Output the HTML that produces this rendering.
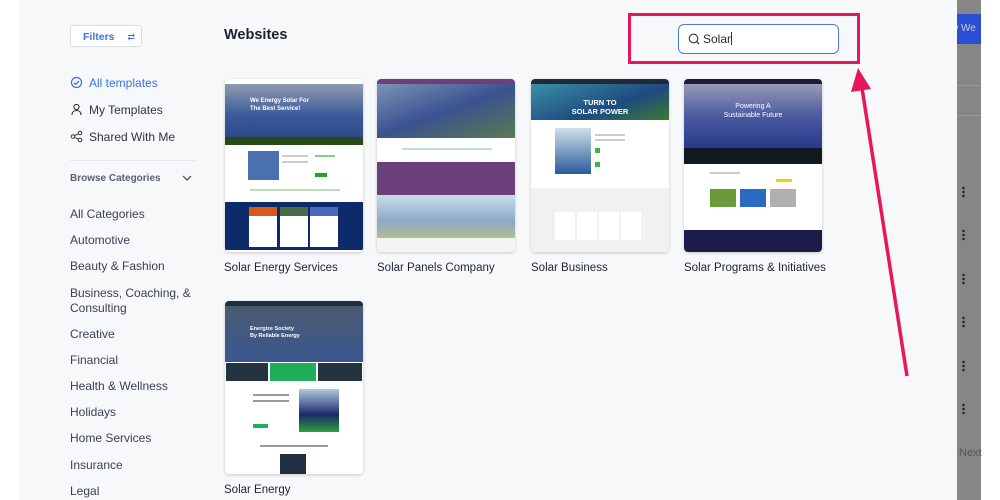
<!DOCTYPE html>
<html><head><meta charset="utf-8"><style>
*{margin:0;padding:0;box-sizing:border-box}
body{width:1000px;height:500px;overflow:hidden;background:#fff;font-family:"Liberation Sans",sans-serif;position:relative}
.main{position:absolute;left:19px;top:0;width:938px;height:500px;background:#f7f8fa}
.a{position:absolute}
.nav{position:absolute;left:70px;font-size:12px;color:#2d3340}
.cat{position:absolute;left:70px;font-size:12px;color:#3a4050;line-height:15px}
.card{position:absolute;width:138px;height:173px;border-radius:4px;overflow:hidden;background:#fff;box-shadow:0 1px 3px rgba(0,0,0,.18)}
.lbl{position:absolute;font-size:11.5px;color:#1f2430}
.gray{position:absolute;left:957px;top:0;width:24px;height:500px;background:#868686}
.dot{position:absolute;left:962px;width:3px;height:12px;background:radial-gradient(circle,#222 1px,transparent 1.5px) 0 0/3px 4px}
.ln{position:absolute;height:2px;background:#ccc}
</style></head><body>
<div class="main"></div>
<div class="a" style="left:70px;top:25px;width:72px;height:22px;border:1px solid #d9dde3;border-radius:3px;background:#fff;font-size:10.5px;color:#3b74e0;padding:5px 0 0 12px;font-weight:bold">Filters <span style="margin-left:10px;font-weight:normal;font-size:9px">⇄</span></div>
<div class="a" style="left:224px;top:27px;font-size:14.5px;font-weight:bold;color:#1c2130">Websites</div>
<svg class="a" style="left:70px;top:76px" width="13" height="13"><circle cx="6.5" cy="6.5" r="5" fill="none" stroke="#3b74e0" stroke-width="1.2"/><path d="M4 6.7l1.8 1.7 3.2-3.3" fill="none" stroke="#3b74e0" stroke-width="1.2"/></svg>
<div class="nav" style="top:76px;left:89px;color:#3b74e0">All templates</div>
<svg class="a" style="left:70px;top:103px" width="13" height="13"><circle cx="6.5" cy="4" r="2.6" fill="none" stroke="#333" stroke-width="1.1"/><path d="M2 12c0-3 2-4.5 4.5-4.5S11 9 11 12" fill="none" stroke="#333" stroke-width="1.1"/></svg>
<div class="nav" style="top:103px;left:89px">My Templates</div>
<svg class="a" style="left:70px;top:130px" width="13" height="13"><circle cx="3" cy="6.5" r="1.8" fill="none" stroke="#333"/><circle cx="10" cy="3" r="1.8" fill="none" stroke="#333"/><circle cx="10" cy="10" r="1.8" fill="none" stroke="#333"/><path d="M4.6 5.6l3.8-1.8M4.6 7.4l3.8 1.8" stroke="#333"/></svg>
<div class="nav" style="top:130px;left:89px">Shared With Me</div>
<div class="a" style="left:70px;top:160px;width:125px;height:1px;background:#e4e7eb"></div>
<div class="a" style="left:70px;top:173px;font-size:10px;font-weight:bold;color:#5a606c">Browse Categories</div>
<svg class="a" style="left:182px;top:175px" width="10" height="7"><path d="M1 1l4 4 4-4" fill="none" stroke="#444" stroke-width="1.2"/></svg>
<div class="cat" style="top:207px">All Categories</div>
<div class="cat" style="top:233px">Automotive</div>
<div class="cat" style="top:259px">Beauty &amp; Fashion</div>
<div class="cat" style="top:286px">Business, Coaching, &amp;<br>Consulting</div>
<div class="cat" style="top:327px">Creative</div>
<div class="cat" style="top:353px">Financial</div>
<div class="cat" style="top:379px">Health &amp; Wellness</div>
<div class="cat" style="top:405px">Holidays</div>
<div class="cat" style="top:431px">Home Services</div>
<div class="cat" style="top:458px">Insurance</div>
<div class="cat" style="top:484px">Legal</div>

<!-- card1 -->
<div class="card" style="left:225px;top:79px">
<div style="height:5px;background:#fff"></div>
<div style="height:53px;background:linear-gradient(#8e9ab0,#3a5a9a 60%,#2e4a88);position:relative"><div style="position:absolute;left:25px;top:13px;color:#fff;font-size:6px;font-weight:bold;line-height:8px">We Energy Solar For<br>The Best Service!</div></div>
<div style="height:8px;background:#2a4a1a"></div>
<div style="height:57px;position:relative"><div style="position:absolute;left:23px;top:6px;width:31px;height:29px;background:#4a70b0"></div><div class="ln" style="left:57px;top:10px;width:26px"></div><div class="ln" style="left:57px;top:16px;width:26px"></div><div class="ln" style="left:90px;top:10px;width:20px;background:#8c8"></div><div style="position:absolute;left:90px;top:28px;width:12px;height:4px;background:#1fa42b"></div><div class="ln" style="left:25px;top:44px;width:90px;background:#bdb"></div></div>
<div style="height:48px;background:#0d2a6b;position:relative"><div style="position:absolute;left:24px;top:5px;width:28px;height:40px;background:#fff;border-top:9px solid #d85a1a"></div><div style="position:absolute;left:55px;top:5px;width:28px;height:40px;background:#fff;border-top:9px solid #4a6a4a"></div><div style="position:absolute;left:85px;top:5px;width:28px;height:40px;background:#fff;border-top:9px solid #4a6ab8"></div></div>
</div>
<div class="lbl" style="left:224px;top:262px">Solar Energy Services</div>
<!-- card2 -->
<div class="card" style="left:377px;top:79px">
<div style="height:5px;background:#6a3f7a"></div>
<div style="height:54px;background:linear-gradient(160deg,#7a94b8,#3a5290 50%,#5a7a50)"></div>
<div style="height:24px;background:#fff;position:relative"><div class="ln" style="left:25px;top:10px;width:90px;background:#bdd"></div></div>
<div style="height:33px;background:#6a3f7a"></div>
<div style="height:43px;background:linear-gradient(#c8dcea,#8ea8c8 60%,#b0c090)"></div>
<div style="height:14px;background:#f4f4f4"></div>
</div>
<div class="lbl" style="left:377px;top:262px">Solar Panels Company</div>
<!-- card3 -->
<div class="card" style="left:531px;top:79px">
<div style="height:5px;background:#1e2a3a"></div>
<div style="height:36px;background:linear-gradient(160deg,#3a90a8,#1e4a80 60%,#3a7a30);color:#fff;font-size:7.5px;font-weight:bold;text-align:center;padding-top:14px;line-height:9px">TURN TO<br>SOLAR POWER</div>
<div style="height:68px;position:relative"><div style="position:absolute;left:24px;top:8px;width:36px;height:46px;background:linear-gradient(#cfe0ea,#2a5a9a)"></div><div class="ln" style="left:64px;top:14px;width:30px"></div><div class="ln" style="left:64px;top:19px;width:30px"></div><div style="position:absolute;left:64px;top:28px;width:5px;height:5px;background:#3aba3a"></div><div style="position:absolute;left:64px;top:42px;width:5px;height:5px;background:#3aba3a"></div></div>
<div style="height:64px;background:#f0f1f3;position:relative"><div style="position:absolute;left:24px;top:24px;width:20px;height:28px;background:#fff"></div><div style="position:absolute;left:46px;top:24px;width:20px;height:28px;background:#fff"></div><div style="position:absolute;left:68px;top:24px;width:20px;height:28px;background:#fff"></div><div style="position:absolute;left:90px;top:24px;width:20px;height:28px;background:#fff"></div></div>
</div>
<div class="lbl" style="left:531px;top:262px">Solar Business</div>
<!-- card4 -->
<div class="card" style="left:684px;top:79px">
<div style="height:5px;background:#1e1e3a"></div>
<div style="height:64px;background:linear-gradient(#9a9ab8,#4a5aa0 50%,#2a3a8a);color:#fff;font-size:7px;text-align:center;padding-top:18px;line-height:9px">Powering A<br>Sustainable Future</div>
<div style="height:16px;background:#101a20"></div>
<div style="height:66px;background:#fff;position:relative"><div class="ln" style="left:26px;top:8px;width:30px"></div><div style="position:absolute;left:26px;top:25px;width:26px;height:18px;background:#6a9a3a"></div><div style="position:absolute;left:56px;top:25px;width:26px;height:18px;background:#2a6ac0"></div><div style="position:absolute;left:86px;top:25px;width:26px;height:18px;background:#b0b0b0"></div><div style="position:absolute;left:92px;top:15px;width:16px;height:3px;background:#f0d000"></div></div>
<div style="height:22px;background:#1c1c4a"></div>
</div>
<div class="lbl" style="left:684px;top:262px">Solar Programs &amp; Initiatives</div>
<!-- card5 -->
<div class="card" style="left:225px;top:301px">
<div style="height:5px;background:#1e3040"></div>
<div style="height:56px;background:linear-gradient(#4a5a70,#3a5890);position:relative"><div style="position:absolute;left:25px;top:20px;color:#fff;font-size:5.5px;font-weight:bold;line-height:7px">Energize Society<br>By Reliable Energy</div></div>
<div style="height:20px;background:#fff;position:relative"><div style="position:absolute;left:1px;top:1px;width:42px;height:18px;background:#23333f"></div><div style="position:absolute;left:45px;top:1px;width:46px;height:18px;background:#1fae5a"></div><div style="position:absolute;left:93px;top:1px;width:44px;height:18px;background:#23333f"></div></div>
<div style="height:55px;position:relative"><div class="ln" style="left:28px;top:12px;width:36px;background:#999"></div><div class="ln" style="left:28px;top:18px;width:36px;background:#999"></div><div style="position:absolute;left:28px;top:42px;width:15px;height:4px;background:#1fae5a"></div><div style="position:absolute;left:74px;top:7px;width:40px;height:43px;background:linear-gradient(#b0c8e0,#1a2a6a 60%,#2aa040)"></div></div>
<div style="height:37px;position:relative"><div class="ln" style="left:35px;top:8px;width:68px;background:#999"></div><div style="position:absolute;left:55px;top:17px;width:26px;height:20px;background:#1f2f3f"></div></div>
</div>
<div class="lbl" style="left:224px;top:484px">Solar Energy</div>

<!-- search -->
<div class="a" style="left:628px;top:13px;width:232px;height:51px;border:3px solid #e8175a"></div>
<div class="a" style="left:678px;top:24px;width:161px;height:30px;border:1px solid #4a7ad8;border-radius:6px;background:#fff"></div>
<svg class="a" style="left:688px;top:33px" width="12" height="12"><circle cx="5.5" cy="5.5" r="4.3" fill="none" stroke="#333" stroke-width="1.1"/><path d="M8.7 8.7l2.5 2.5" stroke="#333" stroke-width="1.1"/></svg>
<div class="a" style="left:703px;top:32px;font-size:12px;color:#2a2a2a">Solar<span style="display:inline-block;width:1px;height:13px;background:#333;vertical-align:-2px"></span></div>
<svg class="a" style="left:0;top:0" width="1000" height="500"><path d="M907 376L862 88" stroke="#e8175a" stroke-width="3.5"/><path d="M858 68L851 92L871 89Z" fill="#e8175a"/></svg>

<div class="gray"></div>
<div class="a" style="left:957px;top:14px;width:24px;height:30px;background:#2b4fd2;color:#ccd;font-size:10px;padding-top:9px;overflow:hidden;white-space:nowrap"><span style="margin-left:-6px">w We</span></div>
<div class="a" style="left:957px;top:85px;width:24px;height:1px;background:#999"></div>
<div class="a" style="left:957px;top:115px;width:24px;height:1px;background:#999"></div>
<div class="dot" style="top:186px"></div><div class="dot" style="top:229px"></div><div class="dot" style="top:273px"></div><div class="dot" style="top:316px"></div><div class="dot" style="top:360px"></div><div class="dot" style="top:403px"></div>
<div class="a" style="left:959px;top:447px;font-size:11px;color:#555">Next</div>
</body></html>
